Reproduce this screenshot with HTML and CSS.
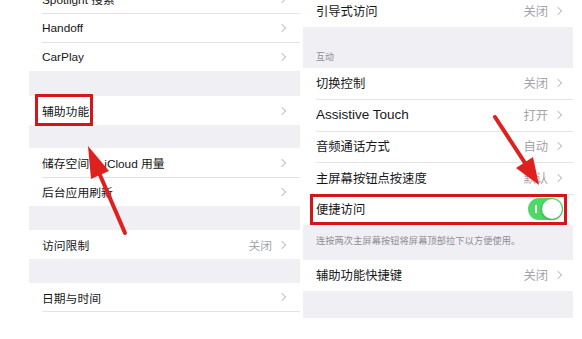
FILE: index.html
```html
<!DOCTYPE html>
<html lang="zh-CN">

<head>
    <meta charset="UTF-8">
    <meta name="viewport" content="width=device-width, initial-scale=1.0">
    <title>辅助功能 - 便捷访问</title>
    <link rel="stylesheet" href="styles.css">
</head>

<body>
    <main class="screens">
        <section class="panel panel-left">
            <div class="group">
                <div class="row">
                    <span class="label">Spotlight 搜索</span>
                    <span class="chev"></span>
                </div>
                <div class="row">
                    <span class="label">Handoff</span>
                    <span class="chev"></span>
                </div>
                <div class="row">
                    <span class="label">CarPlay</span>
                    <span class="chev"></span>
                </div>
            </div>
            <div class="gap gap-a"></div>
            <div class="group">
                <div class="row">
                    <span class="label">辅助功能</span>
                    <span class="chev"></span>
                    <span class="mark mark-left"></span>
                </div>
            </div>
            <div class="gap gap-b"></div>
            <div class="group">
                <div class="row">
                    <span class="label">储存空间与 iCloud 用量</span>
                    <span class="chev"></span>
                </div>
                <div class="row">
                    <span class="label">后台应用刷新</span>
                    <span class="chev"></span>
                </div>
            </div>
            <div class="gap"></div>
            <div class="group">
                <div class="row">
                    <span class="label">访问限制</span>
                    <span class="value">关闭</span>
                    <span class="chev"></span>
                </div>
            </div>
            <div class="gap"></div>
            <div class="group">
                <div class="row row-open">
                    <span class="label">日期与时间</span>
                    <span class="chev"></span>
                </div>
            </div>
        </section>

        <section class="panel panel-right">
            <div class="group">
                <div class="row">
                    <span class="label">引导式访问</span>
                    <span class="value">关闭</span>
                    <span class="chev"></span>
                </div>
            </div>
            <div class="gap gap-head">
                <span class="caption">互动</span>
            </div>
            <div class="group">
                <div class="row">
                    <span class="label">切换控制</span>
                    <span class="value">关闭</span>
                    <span class="chev"></span>
                </div>
                <div class="row">
                    <span class="label latin">Assistive Touch</span>
                    <span class="value">打开</span>
                    <span class="chev"></span>
                </div>
                <div class="row">
                    <span class="label">音频通话方式</span>
                    <span class="value">自动</span>
                    <span class="chev"></span>
                </div>
                <div class="row">
                    <span class="label">主屏幕按钮点按速度</span>
                    <span class="value">默认</span>
                    <span class="chev"></span>
                </div>
                <div class="row">
                    <span class="label">便捷访问</span>
                    <span class="switch on"><span class="knob"></span></span>
                    <span class="mark mark-right"></span>
                </div>
            </div>
            <div class="gap gap-foot">
                <span class="caption foot">连按两次主屏幕按钮将屏幕顶部拉下以方便使用。</span>
            </div>
            <div class="group">
                <div class="row">
                    <span class="label">辅助功能快捷键</span>
                    <span class="value">关闭</span>
                    <span class="chev"></span>
                </div>
            </div>
            <div class="gap gap-end"></div>
        </section>
    </main>

    <!-- red arrows drawn over both screenshots -->
    <svg class="arrows" width="582" height="339" viewBox="0 0 582 339">
        <line x1="125" y1="233" x2="97" y2="168" stroke="#e0201e" stroke-width="4" stroke-linecap="round" />
        <polygon points="88,146 109,171 91,179" fill="#e0201e" />
        <line x1="495" y1="117" x2="527" y2="166" stroke="#e0201e" stroke-width="4" stroke-linecap="round" />
        <polygon points="539,185 533,157 516,168" fill="#e0201e" />
    </svg>
</body>

</html>
```

FILE: styles.css
```css
*,
*::after,
*::before {
    box-sizing: border-box;
}

body {
    font-family: "Liberation Sans", "Noto Sans CJK SC", sans-serif;
    background: #fff;
    color: #161618;
    margin: 0;
    width: 582px;
    height: 339px;
    overflow: hidden;
    position: relative;
}

.screens {
    display: flex;
    gap: 3px;
    padding-left: 29px;
}

.panel {
    display: flex;
    flex-direction: column;
}

.panel-left {
    width: 271px;
    margin-top: -16px;
    font-size: 11.8px;

    .row {
        height: 29px;
        padding: 0 13px;
    }
    .row + .row::before {
        left: 13px;
    }
    .gap {
        height: 24px;
    }
    .gap-a {
        height: 25px;
    }
    .gap-b {
        height: 23px;
    }
    .row-open {
        border-bottom: 1px solid #e3e3e8;
        margin-left: 13px;
        padding-left: 0;
    }
}

.panel-right {
    width: 270px;
    margin-top: -5px;
    font-size: 12.3px;

    .row {
        height: 31.5px;
        padding: 0 10px 0 13px;
    }
    .row + .row::before {
        left: 13px;
    }
    .gap-head {
        height: 41px;
        display: flex;
        align-items: flex-end;
        padding: 0 13px 5px;
    }
    .gap-foot {
        height: 34.5px;
        padding: 8px 13px 0;
    }
    .gap-end {
        height: 27px;
    }
}

.gap {
    background: #efeff4;
}

.row {
    position: relative;
    display: flex;
    align-items: center;
    background: #fff;

    &::before {
        content: "";
        position: absolute;
        top: 0;
        right: 0;
        border-top: 1px solid #e3e3e8;
    }
}

.label {
    flex: 1;
    white-space: nowrap;
}

.latin {
    font-size: 13.5px;
}

.value {
    color: #a4a4a9;
    margin-right: 7px;
}

.chev {
    width: 6px;
    height: 6px;
    border-top: 1px solid #c2c2c7;
    border-right: 1px solid #c2c2c7;
    transform: rotate(45deg);
    margin-right: 2px;
}

.caption {
    font-size: 9px;
    color: #8e8e93;
    white-space: nowrap;
}

.foot {
    font-size: 9.2px;
    letter-spacing: .1px;
}

.switch {
    position: relative;
    width: 35px;
    height: 22px;
    border-radius: 11px;
    background: #4cd964;

    &::before {
        content: "";
        position: absolute;
        left: 7px;
        top: 7px;
        width: 1.5px;
        height: 8px;
        background: #fff;
    }
    .knob {
        position: absolute;
        right: 1px;
        top: 1px;
        width: 20px;
        height: 20px;
        border-radius: 50%;
        background: #fff;
        box-shadow: 0 1px 3px rgba(0, 0, 0, .3);
    }
}

.mark {
    position: absolute;
    border: 3px solid #d3161c;
}

.mark-left {
    left: 6px;
    top: -2px;
    width: 58px;
    height: 32px;
}

.mark-right {
    left: 7px;
    top: 0;
    width: 257px;
    height: 31px;
}

.arrows {
    position: absolute;
    top: 0;
    left: 0;
    pointer-events: none;
}
```
